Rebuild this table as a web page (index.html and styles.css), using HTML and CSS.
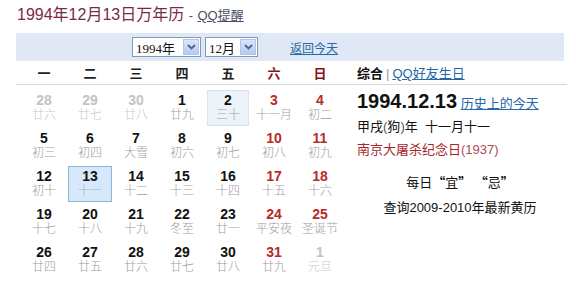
FILE: index.html
```html
<!DOCTYPE html>
<html lang="zh-CN">
<head>
<meta charset="utf-8">
<title>万年历</title>
<link rel="stylesheet" href="styles.css">
</head>
<body>
<div class="title"><span class="title-main">1994年12月13日万年历</span> <span class="title-sep">-</span> <a class="title-link" href="#">QQ提醒</a></div>
<div class="wrap">
  <div class="toolbar">
    <div class="sel sel-year"><span class="sel-text">1994年</span><span class="sel-btn"><svg width="9" height="6" viewBox="0 0 9 6"><polyline points="1,1 4.5,4.5 8,1" fill="none" stroke="#4d6185" stroke-width="1.8"/></svg></span></div>
    <div class="sel sel-month"><span class="sel-text">12月</span><span class="sel-btn"><svg width="9" height="6" viewBox="0 0 9 6"><polyline points="1,1 4.5,4.5 8,1" fill="none" stroke="#4d6185" stroke-width="1.8"/></svg></span></div>
    <a class="today-link" href="#">返回今天</a>
  </div>
  <div class="head">
    <div class="weekdays">
      <span>一</span><span>二</span><span>三</span><span>四</span><span>五</span><span class="we">六</span><span class="we">日</span>
    </div>
    <div class="tabs"><b>综合</b><span class="bar">|</span><a href="#">QQ好友生日</a></div>
  </div>
  <div class="body">
    <div class="grid">
      <div class="cell out"><b>28</b><i>廿六</i></div>
      <div class="cell out"><b>29</b><i>廿七</i></div>
      <div class="cell out"><b>30</b><i>廿八</i></div>
      <div class="cell"><b>1</b><i>廿九</i></div>
      <div class="cell today"><b>2</b><i>三十</i></div>
      <div class="cell red"><b>3</b><i>十一月</i></div>
      <div class="cell red"><b>4</b><i>初二</i></div>

      <div class="cell"><b>5</b><i>初三</i></div>
      <div class="cell"><b>6</b><i>初四</i></div>
      <div class="cell"><b>7</b><i>大雪</i></div>
      <div class="cell"><b>8</b><i>初六</i></div>
      <div class="cell"><b>9</b><i>初七</i></div>
      <div class="cell red"><b>10</b><i>初八</i></div>
      <div class="cell red"><b>11</b><i>初九</i></div>

      <div class="cell"><b>12</b><i>初十</i></div>
      <div class="cell selected"><b>13</b><i>十一</i></div>
      <div class="cell"><b>14</b><i>十二</i></div>
      <div class="cell"><b>15</b><i>十三</i></div>
      <div class="cell"><b>16</b><i>十四</i></div>
      <div class="cell red"><b>17</b><i>十五</i></div>
      <div class="cell red"><b>18</b><i>十六</i></div>

      <div class="cell"><b>19</b><i>十七</i></div>
      <div class="cell"><b>20</b><i>十八</i></div>
      <div class="cell"><b>21</b><i>十九</i></div>
      <div class="cell"><b>22</b><i>冬至</i></div>
      <div class="cell"><b>23</b><i>廿一</i></div>
      <div class="cell red"><b>24</b><i>平安夜</i></div>
      <div class="cell red"><b>25</b><i>圣诞节</i></div>

      <div class="cell"><b>26</b><i>廿四</i></div>
      <div class="cell"><b>27</b><i>廿五</i></div>
      <div class="cell"><b>28</b><i>廿六</i></div>
      <div class="cell"><b>29</b><i>廿七</i></div>
      <div class="cell"><b>30</b><i>廿八</i></div>
      <div class="cell red"><b>31</b><i>廿九</i></div>
      <div class="cell out"><b>1</b><i>元旦</i></div>
    </div>
    <div class="info">
      <div class="date-line"><span class="big-date">1994.12.13</span> <a href="#">历史上的今天</a></div>
      <div class="lunar-line">甲戌<span class="paren">(</span>狗<span class="paren">)</span>年&nbsp;&nbsp;十一月十一</div>
      <div class="fest-line">南京大屠杀纪念日<span class="year">(1937)</span></div>
      <div class="center-line yiji">每日<span class="q">“</span>宜<span class="q">”</span> <span class="q">“</span>忌<span class="q">”</span></div>
      <div class="center-line almanac">查询2009-2010年最新黄历</div>
    </div>
  </div>
</div>
</body>
</html>
```

FILE: styles.css
```css
body {
  margin: 0;
  background: #fff;
  font-family: "Liberation Sans", "Noto Sans CJK SC", sans-serif;
  color: #111;
}
a { color: #1f5f99; }

.title {
  padding: 5px 0 0 17px;
  height: 28px;
  line-height: 20px;
  white-space: nowrap;
}
.title-main {
  font-size: 16px;
  color: #7a2a48;
}
.title-sep {
  font-size: 13px;
  color: #555;
}
.title-link {
  font-size: 13px;
  color: #4a4f62;
}

.wrap {
  margin-left: 16px;
  width: 551px;
}

.toolbar {
  height: 28px;
  margin-right: 3px;
  background: #dfe8f4;
  display: flex;
  align-items: center;
  padding-left: 116px;
}
.sel {
  height: 18px;
  border: 1px solid #7f9db9;
  background: #fff;
  display: flex;
  align-items: center;
  justify-content: space-between;
  padding: 0 1px 0 3px;
  font-family: "Liberation Serif", "Noto Sans CJK SC", serif;
  font-size: 13px;
  color: #111;
}
.sel-year { width: 63px; }
.sel-month { width: 47px; margin-left: 4px; }
.sel-btn {
  width: 16px;
  height: 16px;
  background: linear-gradient(#dbe5fb, #b7c9f0);
  border: 1px solid #b3c5ea;
  box-sizing: border-box;
  display: flex;
  align-items: center;
  justify-content: center;
}
.today-link {
  margin-left: 32px;
  font-size: 12px;
  color: #2368a8;
}

.head {
  display: flex;
  height: 23px;
  border-bottom: 1px solid #d6d6d6;
  align-items: center;
}
.weekdays {
  margin-left: 5px;
  display: grid;
  grid-template-columns: repeat(7, 46px);
  font-family: "Noto Sans CJK SC", sans-serif;
  font-weight: bold;
  font-size: 13px;
  text-align: center;
  color: #222;
}
.weekdays .we { color: #8c1010; }
.tabs {
  margin-left: 14px;
  font-size: 13px;
}
.tabs b { color: #111; }
.tabs .bar { color: #999; margin: 0 3px; }
.tabs a { color: #2368a8; }

.body {
  display: flex;
}
.grid {
  margin-left: 5px;
  padding-top: 4px;
  display: grid;
  grid-template-columns: repeat(7, 46px);
  grid-auto-rows: 38px;
}
.cell {
  margin: 1px 2px;
  border: 1px solid transparent;
  display: flex;
  flex-direction: column;
  align-items: center;
  padding-top: 2px;
  box-sizing: border-box;
}
.cell b {
  font-size: 14px;
  line-height: 15px;
  font-weight: bold;
  color: #111;
}
.cell i {
  font-style: normal;
  font-size: 12px;
  line-height: 15px;
  color: #9e9e9e;
  font-weight: 300;
  white-space: nowrap;
}
.cell.red b { color: #b82a2a; }
.cell.out b { color: #c4c4c4; }
.cell.out i { color: #c8c8c8; }
.cell.today {
  background: #edf3fb;
  border-color: #dbe3ee;
}
.cell.selected {
  margin: 1px;
  background: #d6e8fa;
  border-color: #8fb6db;
}
.cell.selected i { color: #a8b4c0; }

.info {
  margin-left: 14px;
  width: 206px;
  font-size: 13px;
}
.date-line {
  margin-top: 3px;
  line-height: 26px;
  white-space: nowrap;
}
.big-date {
  font-size: 20px;
  font-weight: bold;
  color: #111;
}
.date-line a { color: #2368a8; font-size: 13px; }
.lunar-line {
  line-height: 20px;
  color: #111;
}
.lunar-line .paren { color: #555; }
.fest-line {
  margin-top: 3px;
  line-height: 20px;
  color: #a3282d;
}
.fest-line .year { color: #b04a55; }
.center-line {
  text-align: center;
  line-height: 20px;
  color: #111;
}
.q {
  font-family: "Noto Sans CJK SC", sans-serif;
  font-weight: bold;
}
.yiji { margin-top: 12px; }
.almanac { margin-top: 5px; }
```
